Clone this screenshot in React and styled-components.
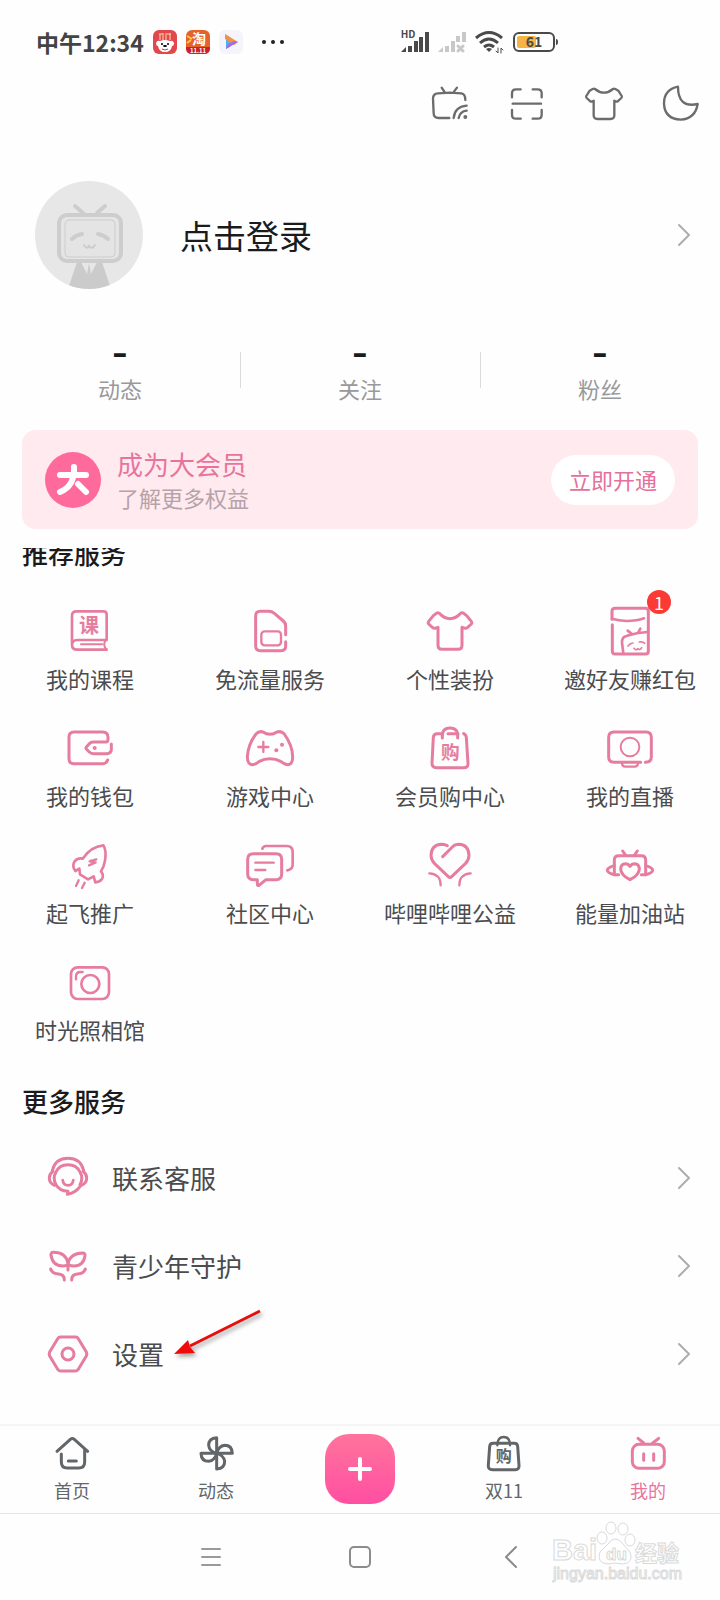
import React from 'react';
import styled, { createGlobalStyle } from 'styled-components';

const PINK = '#e67d9f';
const DARK = '#626669';

const GlobalStyle = createGlobalStyle`
  *, *::before, *::after {
    box-sizing: border-box;
  }
  body {
    margin: 0;
    background: #fefefe;
    color: #1b1b1d;
    font-family: "Noto Sans CJK SC", "Noto Sans", sans-serif;
  }
  button {
    padding: 0;
    border: 0;
    background: none;
    color: inherit;
    font: inherit;
    cursor: pointer;
  }
  a {
    color: inherit;
    text-decoration: none;
  }
  h2, p, ul {
    margin: 0;
    padding: 0;
    list-style: none;
  }
`;

const Page = styled.div`
  display: flex;
  flex-direction: column;
  min-height: 100vh;
`;

/* line drawings share one svg, the size and stroke vary */
const Icon = styled.svg`
  display: block;
  flex: none;
  width: ${(props) => props.$w || 56}px;
  height: ${(props) => props.$h || props.$w || 56}px;
  overflow: visible;
  fill: none;
  stroke: ${(props) => props.$color || PINK};
  stroke-width: ${(props) => props.$stroke || 9};
  stroke-linecap: round;
  stroke-linejoin: round;

  .fill {
    fill: ${(props) => props.$color || PINK};
    stroke: none;
  }
  text {
    fill: ${(props) => props.$color || PINK};
    stroke: none;
    text-anchor: middle;
    font-weight: 700;
  }
`;

/* ---------- status bar ---------- */

const StatusBar = styled.header`
  display: flex;
  align-items: center;
  justify-content: space-between;
  height: 84px;
  padding: 0 162px 0 36px;
`;

const StatusGroup = styled.div`
  display: flex;
  align-items: center;
  gap: 9px;
`;

const Clock = styled.span`
  color: #444;
  font-size: 23px;
  font-weight: 700;
  line-height: 32px;
`;

/* ---------- top ---------- */

const Tools = styled.nav`
  display: flex;
  justify-content: flex-end;
  gap: 37px;
  height: 40px;
  padding: 0 19px;
`;

const Profile = styled.a`
  display: flex;
  align-items: center;
  gap: 37px;
  margin-top: 57px;
  padding: 0 30px 0 35px;
`;

const ProfileName = styled.span`
  flex: 1;
  font-size: 33px;
  line-height: 48px;
`;

const Stats = styled.div`
  display: flex;
  margin-top: 48px;
`;

const Stat = styled.button`
  display: flex;
  flex: 1;
  flex-direction: column;
  align-items: center;
  position: relative;

  & + &::before {
    content: "";
    position: absolute;
    top: 15px;
    left: 0;
    width: 1px;
    height: 36px;
    background: #dcdcdc;
  }
`;

const StatValue = styled.span`
  font-family: Inter, sans-serif;
  font-size: 36px;
  font-weight: 600;
  line-height: 32px;
`;

const StatLabel = styled.span`
  margin-top: 3px;
  color: #999;
  font-size: 22px;
  line-height: 32px;
`;

/* ---------- vip card ---------- */

const VipCard = styled.section`
  display: flex;
  align-items: center;
  gap: 16px;
  height: 99px;
  margin: 26px 22px 0;
  padding: 0 23px;
  border-radius: 14px;
  background: #feeaef;
`;

const VipText = styled.div`
  flex: 1;
`;

const VipTitle = styled.p`
  color: #e8749e;
  font-size: 26px;
  line-height: 34px;
`;

const VipSub = styled.p`
  color: #b6a2a9;
  font-size: 22px;
  line-height: 32px;
`;

const VipButton = styled.button`
  width: 124px;
  height: 50px;
  padding-bottom: 2px;
  border-radius: 25px;
  background: #fff;
  color: #e5709c;
  font-size: 22px;
  line-height: 32px;
`;

/* ---------- services ---------- */

const Services = styled.main`
  margin-top: 19px;
  overflow: hidden;
`;

const SectionTitle = styled.h2`
  margin-top: ${(props) => (props.$scrolled ? -11 : 40)}px;
  padding: 0 22px;
  font-size: 26px;
  font-weight: 500;
  line-height: 32px;
`;

const Grid = styled.div`
  display: grid;
  grid-template-columns: repeat(4, 1fr);
  row-gap: 25px;
  margin-top: 33px;
`;

const Cell = styled.a`
  display: flex;
  flex-direction: column;
  align-items: center;
  gap: 4px;
  color: #4a4c4e;
  font-size: 22px;
  line-height: 32px;
  white-space: nowrap;
`;

const CellIcon = styled.span`
  position: relative;
`;

const Badge = styled.span`
  position: absolute;
  top: -12px;
  right: -13px;
  width: 24px;
  height: 24px;
  border-radius: 50%;
  background: #fb3a35;
  color: #fff;
  font-size: 18px;
  line-height: 24px;
  text-align: center;
`;

const List = styled.ul`
  margin-top: 17px;
`;

const ListRow = styled.a`
  display: flex;
  align-items: center;
  gap: 20px;
  position: relative;
  height: 88px;
  padding: 0 30px 0 44px;
  color: #4a4c4e;
  font-size: 26px;
  line-height: 36px;
`;

const RowLabel = styled.span`
  flex: 1;
`;

const Pointer = styled.svg`
  position: absolute;
  top: -4px;
  left: 170px;
  width: 96px;
  height: 56px;
  filter: drop-shadow(2px 3px 2px rgba(0, 0, 0, 0.35));
`;

/* ---------- bottom ---------- */

const TabBar = styled.nav`
  display: grid;
  grid-template-columns: repeat(5, 1fr);
  height: 90px;
  margin-top: auto;
  border-top: 2px solid #f5f5f5;
  border-bottom: 1px solid #e4e8e8;
`;

const Tab = styled.a`
  display: flex;
  flex-direction: column;
  align-items: center;
  padding-top: 7px;
  color: ${(props) => (props.$active ? '#e8749e' : DARK)};
  font-size: 18px;
  line-height: 34px;
`;

const PublishButton = styled.button`
  display: grid;
  place-items: center;
  place-self: center;
  width: 70px;
  height: 70px;
  margin-bottom: 2px;
  border-radius: 24px;
  background: linear-gradient(#ff749c, #ff4fa2);
`;

const SystemNav = styled.footer`
  display: flex;
  align-items: center;
  justify-content: center;
  gap: 126px;
  position: relative;
  height: 86px;
`;

const Watermark = styled.svg`
  position: absolute;
  top: 4px;
  right: 36px;
  width: 136px;
  height: 68px;
  fill: #fff;
  stroke: #dadada;
  stroke-width: 1;
  font-family: "Liberation Sans", "Noto Sans CJK SC", sans-serif;
  font-weight: 700;
`;

const Chevron = () => (
  <Icon viewBox="0 0 12 24" $w={12} $h={24} $stroke={2} $color="#adadad">
    <path d="M1 2 L11 12 L1 22" />
  </Icon>
);

const services = [
  {
    name: '我的课程',
    box: '186 36 168 168',
    art: (
      <>
        <path strokeWidth="8" d="M216 163V77Q216 64 229 64H310Q320 64 320 74V150H232Q216 150 216 165Q216 179 232 179H320" />
        <path strokeWidth="6" d="M316 152Q308 165 319 178M243 163H306" />
        <text x="267" y="130" fontSize="60">课</text>
      </>
    ),
  },
  {
    name: '免流量服务',
    box: '726 36 168 168',
    art: (
      <>
        <path d="M857 134V108Q857 99 850 93L823 70Q816 64 806 64H781Q767 64 767 78V168Q767 182 781 182H843Q857 182 857 168V155" />
        <rect x="784" y="124" width="59" height="42" rx="10" strokeWidth="7" />
      </>
    ),
  },
  {
    name: '个性装扮',
    box: '186 546 168 168',
    art: (
      <path d="M238 580Q252 596 270 596Q288 596 302 580Q306 577 311 580L320 587L334 604Q337 608 334 612L322 623Q317 627 306 622V676Q306 688 294 688H246Q234 688 234 676V622Q223 627 218 623L206 612Q203 608 206 604L220 587L229 580Q234 577 238 580Z" />
    ),
  },
  {
    name: '邀好友赚红包',
    box: '726 546 168 168',
    badge: 1,
    art: (
      <>
        <path d="M756 598V574Q756 565 765 565H856Q865 565 865 574V694Q865 702 857 702H766Q757 702 757 693V614" />
        <path strokeWidth="8" d="M756 596Q775 602 800 603Q830 603 852 595" />
        <path strokeWidth="8" d="M790 700L786 668Q785 652 799 648Q830 638 862 636M803 632L817 643M841 626L834 639" />
        <path strokeWidth="5" d="M804 678Q811 669 819 669M838 666Q848 664 854 670M822 685Q828 693 833 686Q840 692 845 683" />
      </>
    ),
  },
  {
    name: '我的钱包',
    box: '186 387 168 168',
    art: (
      <>
        <path d="M334 462V478Q334 491 320 491H280Q273 491 268 486L259 477Q257 474 259 471L268 461Q273 456 280 456H318Q324 456 324 446V442Q324 426 308 426H222Q207 426 207 441V506Q207 521 222 521H308Q319 521 323 510" />
        <circle className="fill" cx="284" cy="474" r="6" />
      </>
    ),
  },
  {
    name: '游戏中心',
    box: '726 387 168 168',
    art: (
      <>
        <path d="M768 432Q777 422 789 426Q799 433 810 433Q821 433 831 426Q844 422 853 432Q878 468 878 500Q878 523 864 524Q854 524 842 514Q827 506 810 506Q793 506 778 514Q766 524 756 524Q742 522 742 500Q744 464 768 432Z" />
        <path strokeWidth="7" d="M790 456V486M775 471H805" />
        <circle className="fill" cx="846" cy="464" r="6" />
        <circle className="fill" cx="829" cy="481" r="6" />
      </>
    ),
  },
  {
    name: '会员购中心',
    box: '186 57 168 168',
    art: (
      <>
        <path d="M242 101H232Q221 101 220 112L216 190Q216 203 229 203H311Q325 203 324 190L319 112Q318 104 311 101M264 101H294" />
        <path d="M247 114Q244 84 270 84Q296 84 293 114" />
        <text x="271" y="176" fontSize="56">购</text>
      </>
    ),
  },
  {
    name: '我的直播',
    box: '726 57 168 168',
    art: (
      <>
        <path d="M842 187H762Q746 187 746 171V112Q746 96 762 96H858Q874 96 874 112V171Q874 187 856 187" />
        <circle cx="810" cy="141" r="28" strokeWidth="6" />
        <path strokeWidth="7" d="M786 190Q787 200 796 200H824Q833 200 834 190" />
      </>
    ),
  },
  {
    name: '起飞推广',
    box: '186 48 168 168',
    art: (
      <>
        <path strokeWidth="8" d="M310 76Q320 90 315 122Q312 141 303 154Q310 162 308 172Q305 184 286 187L281 169L264 178L240 163L238 146L226 153Q215 138 224 124Q234 113 248 116Q272 80 310 76Z" />
        <path strokeWidth="7" d="M289 118L269 124L287 127L267 136M272 122L285 128" />
        <path strokeWidth="7" d="M236 181L228 198M254 188L246 204" />
      </>
    ),
  },
  {
    name: '社区中心',
    box: '726 48 168 168',
    art: (
      <>
        <path strokeWidth="8" d="M787 86Q790 78 798 78H860Q878 78 878 96V134Q878 148 862 151" />
        <path d="M760 101H828Q845 101 845 118V162Q845 179 828 179H798L777 196Q772 198 772 192V179H760Q743 179 743 162V118Q743 101 760 101Z" />
        <path strokeWidth="7" d="M766 128H821M766 150H796" />
      </>
    ),
  },
  {
    name: '哔哩哔哩公益',
    box: '186 408 168 168',
    art: (
      <>
        <path d="M262 437Q252 433 244 433Q214 435 213 466Q213 480 224 491L265 530Q270 535 275 530L316 491Q327 480 327 466Q326 435 297 433Q285 433 277 441L248 470" />
        <path strokeWidth="7" d="M208 520Q242 522 242 556M332 520Q298 522 298 556" />
      </>
    ),
  },
  {
    name: '能量加油站',
    box: '726 408 168 168',
    art: (
      <>
        <path d="M776 524H763V480Q763 467 776 467H844Q857 467 857 480V524H844" />
        <path d="M763 497Q742 503 742 511Q742 519 763 524M857 497Q878 503 878 511Q878 519 857 524" />
        <path d="M810 539Q782 525 782 506Q783 492 796 491Q805 491 810 499Q815 491 824 491Q837 492 838 506Q838 525 810 539Z" />
        <path d="M788 453L797 466M832 453L823 466" />
      </>
    ),
  },
  {
    name: '时光照相馆',
    box: '186 399 168 168',
    art: (
      <>
        <rect x="213" y="442" width="114" height="95" rx="20" strokeWidth="8" />
        <circle cx="271" cy="492" r="27" strokeWidth="8" />
        <path strokeWidth="7" d="M228 478V470Q228 456 241 456H248" />
      </>
    ),
  },
];

const more = [
  {
    name: '联系客服',
    box: '132 252 144 144',
    art: (
      <>
        <path d="M157 302Q166 265 204 265Q242 265 251 302" />
        <path d="M240 344Q251 325 240 306Q230 284 204 284Q178 284 168 306Q157 325 168 344Q178 362 204 364L202 373Q226 369 240 350" />
        <path d="M159 304Q148 312 148 325Q148 340 164 346M249 304Q260 312 260 325Q260 340 244 346" />
        <path strokeWidth="8" d="M188 330Q190 346 204 346Q218 346 220 330" />
      </>
    ),
  },
  {
    name: '青少年守护',
    box: '132 516 144 144',
    art: (
      <>
        <path d="M204 600V578Q196 547 160 547Q152 547 153 556Q158 588 188 588Q199 588 204 584" />
        <path d="M204 580Q211 550 248 549Q256 549 255 557Q251 588 222 588Q212 588 206 584" />
        <path d="M152 597Q156 611 176 612Q193 613 193 630M256 597Q252 611 232 612Q215 613 215 630" />
      </>
    ),
  },
  {
    name: '设置',
    box: '132 780 144 144',
    pointer: true,
    art: (
      <>
        <path d="M181 801H227Q232 801 235 806L259 846Q262 852 259 858L235 898Q232 903 227 903H181Q176 903 173 898L149 858Q146 852 149 846L173 806Q176 801 181 801Z" />
        <circle cx="204" cy="852" r="18" />
      </>
    ),
  },
];

const petal = 'M650 160V113Q626 114 626 136Q628 154 650 160Z';

const tabs = [
  {
    name: '首页',
    box: '156 99 120 120',
    art: (
      <path d="M171 154L211 118Q217 113 223 118L263 154M184 162V186Q184 204 202 204H236Q254 204 254 186V147M205 183H229" />
    ),
  },
  {
    name: '动态',
    box: '588 99 120 120',
    art: [0, 90, 180, 270].map((deg) => (
      <path key={deg} d={petal} transform={`rotate(${deg} 650 160)`} />
    )),
  },
  null,
  {
    name: '双11',
    box: '372 99 120 120',
    art: (
      <>
        <path d="M399 130H463Q472 130 473 139L477 196Q478 209 466 209H397Q384 209 385 196L389 139Q390 130 399 130Z" />
        <path strokeWidth="7" d="M412 136Q412 111 431 111Q450 111 450 136" />
        <text x="431" y="187" fontSize="48">购</text>
      </>
    ),
  },
  {
    name: '我的',
    box: '804 99 120 120',
    active: true,
    art: (
      <>
        <rect x="817" y="133" width="96" height="72" rx="20" />
        <path d="M834 115L851 129M896 115L878 129M851 161V181M881 161V181" />
      </>
    ),
  },
];

const StatusIcons = () => (
  <>
    <StatusGroup>
      <Clock>中午12:34</Clock>
      <svg width="24" height="24" viewBox="0 0 24 24">
        <rect width="24" height="24" rx="6" fill="#e2474d" />
        <path d="M7 4v6M10 3v7M13 3v7M17 3v7M6 4h4M14 4h4" stroke="#ffd9a8" strokeWidth="1" />
        <path d="M3 13q1-3 4-2q5-2 10 0q3-1 4 2q0 3-2 3q-1 6-7 6t-7-6q-2 0-2-3z" fill="#fff" />
        <circle cx="9" cy="14" r="1" />
        <circle cx="15" cy="14" r="1" />
        <ellipse cx="12" cy="16" rx="2" ry="1" />
        <path d="M9 19q3 2 6 0" stroke="#d33" fill="none" />
      </svg>
      <svg width="24" height="24" viewBox="0 0 24 24">
        <rect width="24" height="24" rx="6" fill="#e5622a" />
        <path d="M0 17h24v1q0 6-6 6H6q-6 0-6-6z" fill="#cf1f2a" />
        <path d="M1 6l5 3M1 13l4-3" stroke="#ffc94d" strokeWidth="2" />
        <text x="13" y="14" fontSize="14" fontWeight="700" fill="#fff" textAnchor="middle">淘</text>
        <text x="12" y="23" fontSize="6" fontWeight="700" fill="#fff" textAnchor="middle">11.11</text>
      </svg>
      <svg width="24" height="24" viewBox="0 0 24 24">
        <rect width="24" height="24" rx="6" fill="#f5f4fa" />
        <path d="M7 5v14l5-3V8z" fill="#45b5f5" />
        <path d="M6 4l13 8-4 3-9-6z" fill="#f79045" />
        <path d="M19 12L7 19l1-4 7-4z" fill="#a46be8" />
      </svg>
      <Icon viewBox="0 0 32 24" $w={32} $h={24} $color="#222">
        <circle className="fill" cx="12" cy="12" r="2" />
        <circle className="fill" cx="21" cy="12" r="2" />
        <circle className="fill" cx="30" cy="12" r="2" />
      </Icon>
    </StatusGroup>
    <StatusGroup>
      <Icon viewBox="0 0 28 24" $w={28} $h={24} $stroke={4} $color="#4a4a4a">
        <text x="7" y="8" fontSize="10">HD</text>
        <path strokeLinecap="butt" d="M9 22V16M15 22V11M20 22V7M26 22V2" />
        <path className="fill" d="M0 22L5 17V22Z" />
      </Icon>
      <Icon viewBox="0 0 28 24" $w={28} $h={24} $stroke={4} $color="#c8c8c8">
        <path strokeLinecap="butt" d="M9 22V16M15 22V11M20 12V6M26 12V2" />
        <path className="fill" d="M0 22L5 17V22Z" />
        <path strokeWidth="3" d="M20 16L25 21M25 16L20 21" />
      </Icon>
      <Icon viewBox="0 0 28 24" $w={28} $h={24} $stroke={3} $color="#4a4a4a">
        <path strokeLinecap="butt" d="M1 8Q14 -3 27 8M5 13Q14 5 23 13M9 17Q14 13 19 17" />
        <path className="fill" d="M11 19Q14 17 17 19L14 22Z" />
        <path strokeWidth="1" d="M23 18V23L21 21M26 23V18L28 20" />
      </Icon>
      <Icon viewBox="0 0 46 24" $w={46} $h={24} $stroke={2} $color="#4a4a4a">
        <rect x="2" y="3" width="40" height="18" rx="5" />
        <rect x="5" y="6" width="19" height="12" rx="2" fill="#f5b445" stroke="none" />
        <path className="fill" d="M44 9q2 0 2 3t-2 3z" />
        <text x="22" y="17" fontSize="14">61</text>
      </Icon>
    </StatusGroup>
  </>
);

const Tool = ({ label, box, children }) => (
  <button type="button" aria-label={label}>
    <Icon viewBox={box} $w={40} $stroke={7} $color="#6c6c6c">
      {children}
    </Icon>
  </button>
);

const Avatar = () => (
  <svg width="108" height="108" viewBox="0 0 108 108">
    <defs>
      <clipPath id="avatar">
        <circle cx="54" cy="54" r="54" />
      </clipPath>
    </defs>
    <g clipPath="url(#avatar)">
      <rect width="108" height="108" fill="#e7e7e7" />
      <path d="M33 108L42 81H67L76 108Z" fill="#cbcbcb" />
      <path d="M46 81L52 93L54 82L56 93L62 81" fill="#e7e7e7" />
      <g fill="none" stroke="#cdcdcd" strokeLinecap="round">
        <path d="M40 25L48 32M70 25L62 32" strokeWidth="4" />
        <rect x="24" y="34" width="62" height="46" rx="8" strokeWidth="4" fill="#e4e4e4" />
        <rect x="30" y="39" width="50" height="37" rx="4" strokeWidth="1" />
        <path d="M37 58Q41 54 47 53M63 53Q69 54 73 58" strokeWidth="4" />
        <path d="M49 64Q52 69 54 65Q57 69 60 64" strokeWidth="2" />
      </g>
    </g>
  </svg>
);

export default function App() {
  return (
    <Page>
      <GlobalStyle />
      <StatusBar>
        <StatusIcons />
      </StatusBar>

      <Tools>
        <Tool label="投屏" box="210 252 120 120">
          <path d="M268 354H236Q221 354 221 340L219 296Q219 281 234 280L270 278L304 280Q316 281 316 300M245 263L253 275M291 263L282 275" />
          <path d="M281 354Q284 320 320 317M296 354Q300 334 320 332" />
          <circle className="fill" cx="316" cy="351" r="6" />
        </Tool>
        <Tool label="扫一扫" box="441 252 120 120">
          <path d="M456 292V280Q456 268 468 268H482M518 268H533Q545 268 545 280V292M456 330V344Q456 356 468 356H482M518 356H533Q545 356 545 344V330M458 311H543" />
        </Tool>
        <Tool label="主题" box="672 252 120 120">
          <path d="M705 267Q718 278 732 278Q746 278 759 267Q762 265 766 267L775 272L785 288Q787 291 784 294L773 304Q769 306 763 302V346Q763 357 752 357H712Q701 357 701 346V302Q695 306 691 304L680 294Q677 291 679 288L689 272L698 267Q702 265 705 267Z" />
        </Tool>
        <Tool label="夜间模式" box="903 252 120 120">
          <path d="M954 260Q912 268 912 311Q914 357 962 359Q1006 356 1013 312Q954 325 954 260Z" />
        </Tool>
      </Tools>

      <Profile href="#login">
        <Avatar />
        <ProfileName>点击登录</ProfileName>
        <Chevron />
      </Profile>

      <Stats>
        {['动态', '关注', '粉丝'].map((label) => (
          <Stat type="button" key={label}>
            <StatValue>-</StatValue>
            <StatLabel>{label}</StatLabel>
          </Stat>
        ))}
      </Stats>

      <VipCard>
        <Icon viewBox="0 0 56 56" $w={56} $stroke={6} $color="#fff">
          <circle cx="28" cy="28" r="28" fill="#fe6a9c" stroke="none" />
          <path d="M15 23H41M29 15Q30 34 15 40M33 32L41 40" />
        </Icon>
        <VipText>
          <VipTitle>成为大会员</VipTitle>
          <VipSub>了解更多权益</VipSub>
        </VipText>
        <VipButton type="button">立即开通</VipButton>
      </VipCard>

      <Services>
        <SectionTitle $scrolled>推荐服务</SectionTitle>
        <Grid>
          {services.map((item) => (
            <Cell href="#service" key={item.name}>
              <CellIcon>
                <Icon viewBox={item.box}>{item.art}</Icon>
                {item.badge && <Badge>{item.badge}</Badge>}
              </CellIcon>
              {item.name}
            </Cell>
          ))}
        </Grid>

        <SectionTitle>更多服务</SectionTitle>
        <List>
          {more.map((item) => (
            <li key={item.name}>
              <ListRow href="#more">
                <Icon viewBox={item.box} $w={48}>{item.art}</Icon>
                <RowLabel>{item.name}</RowLabel>
                <Chevron />
                {item.pointer && (
                  <Pointer viewBox="0 0 96 56">
                    <path d="M90 5L20 40" stroke="#e60f0f" strokeWidth="3" />
                    <path d="M4 48L18 34L20 41L25 47Z" fill="#f00b0b" />
                  </Pointer>
                )}
              </ListRow>
            </li>
          ))}
        </List>
      </Services>

      <TabBar>
        {tabs.map((tab) =>
          tab ? (
            <Tab href="#tab" key={tab.name} $active={tab.active}>
              <Icon viewBox={tab.box} $w={40} $color={tab.active ? PINK : DARK}>
                {tab.art}
              </Icon>
              {tab.name}
            </Tab>
          ) : (
            <PublishButton type="button" key="publish" aria-label="发布">
              <Icon viewBox="0 0 24 24" $w={24} $stroke={4} $color="#fff">
                <path d="M12 2V22M2 12H22" />
              </Icon>
            </PublishButton>
          )
        )}
      </TabBar>

      <SystemNav>
        <button type="button" aria-label="菜单">
          <Icon viewBox="0 0 24 24" $w={24} $stroke={2} $color="#9a9a9a">
            <path d="M4 4H22M4 12H22M4 20H22" />
          </Icon>
        </button>
        <button type="button" aria-label="主页">
          <Icon viewBox="0 0 24 24" $w={24} $stroke={2} $color="#8c8c8c">
            <rect x="2" y="2" width="20" height="20" rx="4" />
          </Icon>
        </button>
        <button type="button" aria-label="返回">
          <Icon viewBox="0 0 24 24" $w={24} $stroke={2} $color="#8c8c8c">
            <path d="M18 2L8 12L18 22" />
          </Icon>
        </button>
        <Watermark viewBox="0 0 136 68">
          <text x="4" y="42" fontSize="29">Bai</text>
          <ellipse cx="54" cy="20" rx="5" ry="6" />
          <ellipse cx="63" cy="10" rx="5" ry="6" />
          <ellipse cx="75" cy="11" rx="5" ry="6" />
          <ellipse cx="82" cy="22" rx="5" ry="6" />
          <path d="M67 21Q72 21 75 26L82 34Q86 45 75 46Q67 44 60 46Q48 45 52 34L60 26Q63 21 67 21Z" />
          <text x="58" y="42" fontSize="17">du</text>
          <text x="87" y="43" fontSize="22">经验</text>
          <text x="5" y="61" fontSize="16" fontWeight="400">jingyan.baidu.com</text>
        </Watermark>
      </SystemNav>
    </Page>
  );
}
